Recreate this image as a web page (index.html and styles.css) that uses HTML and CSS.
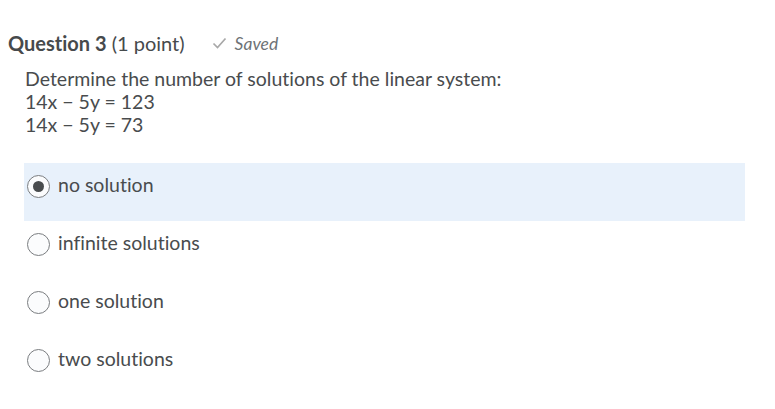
FILE: index.html
```html
<!DOCTYPE html>
<html>
<head>
<meta charset="utf-8">
<link rel="stylesheet" href="styles.css">
</head>
<body>
<div class="page">
  <div class="header">
    <span class="qtitle"><b>Question 3</b> (1 point)</span>
    <span class="saved">
      <svg class="check" width="15" height="12" viewBox="0 0 15 12"><path d="M1.5 6.5 L5.5 10.5 L13.5 1.5" fill="none" stroke="#a8a8a8" stroke-width="1.7"/></svg>
      <i>Saved</i>
    </span>
  </div>
  <div class="question">
    <div>Determine the number of solutions of the linear system:</div>
    <div>14x − 5y = 123</div>
    <div>14x − 5y = 73</div>
  </div>
  <div class="options">
    <div class="option selected"><span class="radio checked"></span><span class="label">no solution</span></div>
    <div class="option"><span class="radio"></span><span class="label">infinite solutions</span></div>
    <div class="option"><span class="radio"></span><span class="label">one solution</span></div>
    <div class="option"><span class="radio"></span><span class="label">two solutions</span></div>
  </div>
</div>
</body>
</html>
```
FILE: styles.css
```css
html, body { margin: 0; padding: 0; background: #fff; }
body { font-family: Lato, "Open Sans", sans-serif; color: #494c4e; font-variant-ligatures: none; }
.page { padding: 29px 30px 0 8px; }
.header { display: flex; align-items: center; height: 28px; }
.qtitle { font-size: 20px; color: #464a4c; }
.qtitle b { font-weight: 700; }
.saved { margin-left: 27px; display: flex; align-items: center; gap: 8px; color: #6e7376; font-size: 17.5px; }
.question { padding: 10px 0 0 17px; font-size: 19.5px; line-height: 23px; color: #494c4e; }
.options { margin-top: 27px; padding-left: 16px; }
.option { display: flex; align-items: center; height: 58px; box-sizing: border-box; padding: 0 0 14px 3px; width: 721px; }
.option.selected { background: #e8f1fb; }
.radio { width: 23px; height: 23px; border: 1px solid #7a7d80; border-radius: 50%; box-sizing: border-box; background: #fbfcfd; position: relative; flex: none; margin-right: 8px; margin-top: 3px; }
.radio.checked::after { content: ""; position: absolute; left: 5px; top: 5px; width: 11px; height: 11px; border-radius: 50%; background: #494c4e; }
.label { font-size: 19.5px; line-height: 24px; }
```
